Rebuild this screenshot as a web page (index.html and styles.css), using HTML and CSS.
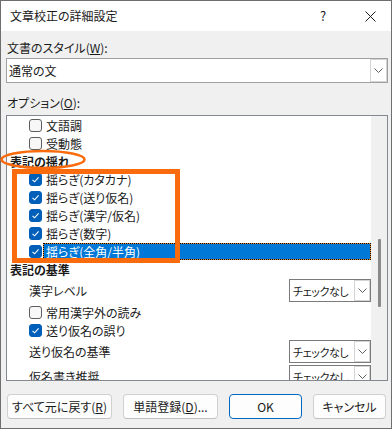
FILE: index.html
```html
<!DOCTYPE html>
<html lang="ja">
<head>
<meta charset="utf-8">
<title>文章校正の詳細設定</title>
<link rel="stylesheet" href="styles.css">
</head>
<body>
<div class="window">
  <div class="titlebar">
    <span class="title">文章校正の詳細設定</span>
    <span class="help">?</span>
    <span class="close"><svg width="11" height="11" viewBox="0 0 11 11"><path d="M0.5 0.5 L10.5 10.5 M10.5 0.5 L0.5 10.5" stroke="#1a1a1a" stroke-width="1"/></svg></span>
  </div>
  <div class="body">
    <div class="label first">文書のスタイル(<u>W</u>):</div>
    <div class="combo main">
      <span class="combo-text">通常の文</span>
      <span class="combo-btn"><svg width="9" height="5" viewBox="0 0 9 5"><path d="M0.5 0.5 L4.5 4.5 L8.5 0.5" fill="none" stroke="#606060" stroke-width="1"/></svg></span>
    </div>
    <div class="label second">オプション(<u>O</u>):</div>
    <div class="list">
      <div class="items">
        <div class="row"><span class="cb"></span><span class="txt">文語調</span></div>
        <div class="row"><span class="cb"></span><span class="txt">受動態</span></div>
        <div class="row head"><span class="txt">表記の揺れ</span></div>
        <div class="row"><span class="cb on"><svg width="11" height="11" viewBox="0 0 11 11"><path d="M2.5 5.8 L4.6 7.8 L8.6 3.4" fill="none" stroke="#fff" stroke-width="1.1"/></svg></span><span class="txt">揺らぎ(カタカナ)</span></div>
        <div class="row"><span class="cb on"><svg width="11" height="11" viewBox="0 0 11 11"><path d="M2.5 5.8 L4.6 7.8 L8.6 3.4" fill="none" stroke="#fff" stroke-width="1.1"/></svg></span><span class="txt">揺らぎ(送り仮名)</span></div>
        <div class="row"><span class="cb on"><svg width="11" height="11" viewBox="0 0 11 11"><path d="M2.5 5.8 L4.6 7.8 L8.6 3.4" fill="none" stroke="#fff" stroke-width="1.1"/></svg></span><span class="txt">揺らぎ(漢字/仮名)</span></div>
        <div class="row"><span class="cb on"><svg width="11" height="11" viewBox="0 0 11 11"><path d="M2.5 5.8 L4.6 7.8 L8.6 3.4" fill="none" stroke="#fff" stroke-width="1.1"/></svg></span><span class="txt">揺らぎ(数字)</span></div>
        <div class="row"><span class="cb on"><svg width="11" height="11" viewBox="0 0 11 11"><path d="M2.5 5.8 L4.6 7.8 L8.6 3.4" fill="none" stroke="#fff" stroke-width="1.1"/></svg></span><span class="txt sel">揺らぎ(全角/半角)</span></div>
        <div class="row head"><span class="txt">表記の基準</span></div>
        <div class="row crow"><span class="lbl">漢字レベル</span><span class="combo small"><span class="combo-text">チェックなし</span><span class="combo-btn"><svg width="9" height="5" viewBox="0 0 9 5"><path d="M0.5 0.5 L4.5 4.5 L8.5 0.5" fill="none" stroke="#606060" stroke-width="1"/></svg></span></span></div>
        <div class="row"><span class="cb"></span><span class="txt">常用漢字外の読み</span></div>
        <div class="row"><span class="cb on"><svg width="11" height="11" viewBox="0 0 11 11"><path d="M2.5 5.8 L4.6 7.8 L8.6 3.4" fill="none" stroke="#fff" stroke-width="1.1"/></svg></span><span class="txt">送り仮名の誤り</span></div>
        <div class="row crow"><span class="lbl">送り仮名の基準</span><span class="combo small"><span class="combo-text">チェックなし</span><span class="combo-btn"><svg width="9" height="5" viewBox="0 0 9 5"><path d="M0.5 0.5 L4.5 4.5 L8.5 0.5" fill="none" stroke="#606060" stroke-width="1"/></svg></span></span></div>
        <div class="row crow"><span class="lbl">仮名書き推奨</span><span class="combo small"><span class="combo-text">チェックなし</span><span class="combo-btn"><svg width="9" height="5" viewBox="0 0 9 5"><path d="M0.5 0.5 L4.5 4.5 L8.5 0.5" fill="none" stroke="#606060" stroke-width="1"/></svg></span></span></div>
      </div>
      <div class="scrollbar"><div class="thumb"></div></div>
    </div>
    <div class="buttons">
      <button class="btn b1">すべて元に戻す(<u>R</u>)</button>
      <button class="btn b2">単語登録(<u>D</u>)...</button>
      <button class="btn b3 default">OK</button>
      <button class="btn b4">キャンセル</button>
    </div>
  </div>
  <svg class="annot" width="392" height="429" viewBox="0 0 392 429">
    <ellipse cx="43" cy="159.5" rx="41.5" ry="8.5" fill="none" stroke="#f96b0c" stroke-width="2.6"/>
    <rect x="14.5" y="171.5" width="163" height="89" fill="none" stroke="#f96b0c" stroke-width="5"/>
  </svg>
</div>
</body>
</html>
```

FILE: styles.css
```css
* { box-sizing: border-box; }
html, body { margin: 0; padding: 0; }
body {
  width: 392px;
  height: 429px;
  overflow: hidden;
  font-family: "Noto Sans CJK JP", "Noto Sans", sans-serif;
  font-size: 12px;
  color: #1a1a1a;
  font-feature-settings: "palt";
  white-space: nowrap;
}
.window {
  position: relative;
  width: 392px;
  height: 429px;
  border: 1px solid #6f6f6f;
  background: #f0f0f0;
}
.titlebar {
  height: 30px;
  background: #ffffff;
  display: flex;
  align-items: center;
  padding-left: 9px;
}
.title { flex: 1; font-size: 12px; line-height: 16px; }
.help {
  width: 16px;
  text-align: center;
  font-size: 13px;
  line-height: 16px;
  margin-right: 31px;
}
.close {
  width: 16px;
  display: flex;
  justify-content: center;
  margin-right: 13px;
}
.body { padding: 0 3px 0 5px; }
.label { line-height: 16px; height: 16px; padding-left: 1px; }
.label.first { margin-top: 9px; }
.label.second { margin-top: 12px; }
.combo {
  display: flex;
  align-items: stretch;
  background: #fff;
  border: 1px solid #a0a0a0;
}
.combo.main { margin-top: 2px; height: 25px; }
.combo-text { flex: 1; display: flex; align-items: center; padding-left: 2px; overflow: hidden; }
.combo-btn {
  width: 17px;
  flex: none;
  display: flex;
  align-items: center;
  justify-content: center;
  border: 1px solid #d4d4d4;
  margin: 0;
  background: #fff;
}
.list {
  margin-top: 4px;
  height: 266px;
  border: 1px solid #828790;
  background: #fff;
  display: flex;
  overflow: hidden;
}
.items { flex: 1; display: flex; flex-direction: column; }
.row {
  height: 18px;
  flex: none;
  display: flex;
  align-items: center;
  padding-left: 22px;
}
.row.head { padding-left: 3px; font-weight: bold; }
.row.crow { height: 25px; }
.cb {
  width: 13px;
  height: 13px;
  border: 1px solid #5e5e5e;
  border-radius: 3px;
  background: #f7f7f7;
  flex: none;
  display: flex;
  align-items: center;
  justify-content: center;
}
.cb.on { background: #005fb8; border-color: #005fb8; }
.txt { line-height: 17px; height: 17px; padding: 0 3px; margin-left: 1px; }
.row.head .txt { margin-left: 0; padding: 0; }
.txt.sel {
  flex: 1;
  color: #fff;
  border: 1px dotted #000;
  background: linear-gradient(#0078d7, #0078d7) padding-box, #e58a2e border-box;
  padding: 0 2px;
  line-height: 15px;
}
.lbl { line-height: 17px; }
.combo.small {
  margin-left: auto;
  width: 82px;
  height: 23px;
  border: 1px solid #7a7a7a;
  font-size: 11px;
  letter-spacing: -0.4px;
}
.combo.small .combo-text { padding-left: 3px; }
.combo.small .combo-btn { width: 16px; }
.scrollbar {
  width: 16px;
  flex: none;
  background: #f0f0f0;
}
.thumb {
  margin-top: 123px;
  margin-left: 7px;
  width: 3px;
  height: 68px;
  background: #8a8a8a;
  border-radius: 1px;
}
.buttons {
  margin-top: 13px;
  display: flex;
  gap: 11px;
  padding-left: 1px;
}
.btn {
  height: 25px;
  font-family: inherit;
  font-size: 12px;
  color: #1a1a1a;
  background: #fdfdfd;
  border: 1px solid #d0d0d0;
  border-bottom-color: #c0c0c0;
  border-radius: 4px;
  padding: 0;
  font-feature-settings: "palt";
  white-space: nowrap;
}
.b1 { width: 105px; }
.b2 { width: 95px; }
.b3, .b4 { width: 73px; }
.btn.default { border: 1px solid #0067c0; }
.annot { position: absolute; left: -1px; top: -1px; pointer-events: none; }
```
